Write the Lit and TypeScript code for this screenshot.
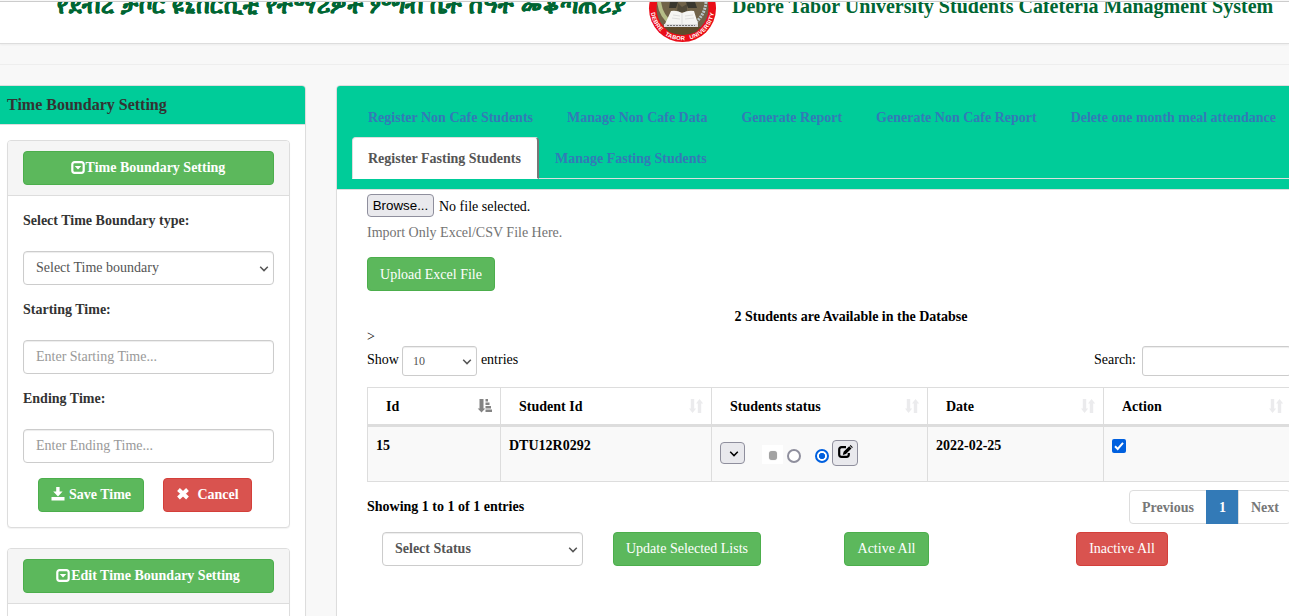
import { LitElement, html, css, svg } from "lit";
import { customElement } from "lit/decorators.js";

const icon = (body: unknown, cls = "ic") =>
  html`<svg class=${cls} viewBox="0 0 14 14" width="14" height="14">${body}</svg>`;

const collapseDown = icon(svg`
  <path fill="none" stroke="currentColor" stroke-width="2.200" d="M3.600 1.100h6.800a2.300 2.300 0 0 1 2.300 2.300v6.200a2.300 2.300 0 0 1-2.300 2.300H3.600a2.300 2.300 0 0 1-2.300-2.300V3.400a2.300 2.300 0 0 1 2.300-2.300z"/>
  <path fill="currentColor" d="M3.700 5h6.600L7 8.500z"/>`);
const save = icon(svg`
  <path fill="currentColor" d="M5.200-1h3.400v4.500h3L7 8.500 2.200 3.500h3zM.5 9h13v3.600H.5z"/>`);
const remove = icon(svg`
  <path fill="none" stroke="currentColor" stroke-width="4" d="M2.500 1.500l9 8.500M11.500 1.500l-9 8.500"/>`);
const sortBoth = icon(svg`
  <path fill="currentColor" d="M1.800 0h3.400v9.500h2L3.500 14 0 9.500h1.800zM8.800 14h3.400V4.500h2L10.500 0 7 4.500h1.800z"/>`, "sort");
const sortAsc = icon(svg`
  <path fill="currentColor" d="M1.500 0h4v9.500h1.800L3.500 13.500-.3 9.500h1.800zM7.500 0h2.500v2.500H7.500zM7.500 3.500h4v2.500h-4zM7.500 7h5.500v2.500H7.500zM7.500 10.500H14V13H7.500z"/>`, "sort on");
const chevron = html`<svg class="chev" viewBox="0 0 10 6" width="10" height="6"><path fill="none" stroke="currentColor" stroke-width="1.500" d="M1.200.8L5 4.600 8.800.8"/></svg>`;

@customElement("app-root")
export class AppRoot extends LitElement {
  static styles = css`
    :host { display: block; width: 1289px; height: 616px; overflow: hidden; background: #f8f8f8;
      font: 14px/20px "Liberation Serif", "Times New Roman", serif; color: #000; }
    * { box-sizing: border-box; }
    .top { margin-top: 1px; background: #fff; border-top: 1px solid #ccc; border-bottom: 1px solid #ddd;
      height: 43px; overflow: hidden; display: flex; box-shadow: 0 1px 2px rgba(0,0,0,.05); }
    .wrap { display: flow-root; background: #f8f8f8; }
    .title { color: #063; font-weight: bold; font-size: 20px; line-height: 24px; white-space: nowrap; margin-top: -8px; }
    .am { width: 648px; padding-left: 57px; font-size: 23px; letter-spacing: .65px; flex: none; -webkit-text-stroke: .5px #063; }
    .en { margin-left: 16px; letter-spacing: .015px; }
    .logo { display: block; flex: none; }
    .rule { height: 1px; background: #eee; margin: 20px 0; }
    .cols { display: flex; align-items: flex-start; }
    .panel { background: #fff; border: 1px solid #ddd; border-radius: 4px; box-shadow: 0 1px 1px rgba(0,0,0,.05); }
    .side { width: 314px; margin-left: -8px; flex: none; height: 560px; }
    .side > .head { background: #00cc99; color: #333; font-size: 16px; font-weight: bold; line-height: 18px;
      padding: 10px 15px; height: 39px; border-bottom: 1px solid #ddd; border-radius: 3px 3px 0 0; padding-left: 14px; }
    .box { margin: 15px 15px 20px 14px; font-weight: bold; color: #333; }
    .box + .box { margin-top: 0; }
    .box > .head { background: #f5f5f5; padding: 10px 15px; border-bottom: 1px solid #ddd; border-radius: 3px 3px 0 0; }
    .body { padding: 15px; }
    .btn { display: inline-flex; align-items: center; justify-content: center; height: 34px; padding: 0 0 1px; color: #fff;
      background: #5cb85c; border: 1px solid #4cae4c; border-radius: 4px; font: inherit; white-space: nowrap; }
    .red { background: #d9534f; border-color: #d43f3a; }
    .full { width: 100%; }
    .ic { flex: none; overflow: visible; }
    .full .ic { margin-left: -1px; margin-right: 1px; }
    .field { display: flex; align-items: center; justify-content: space-between; height: 34px; padding: 0 4px 0 12px;
      background: #fff; border: 1px solid #ccc; border-radius: 4px; color: #555; font-weight: normal; box-shadow: inset 0 1px 1px rgba(0,0,0,.075); }
    .field.ph { color: #999; }
    .chev { position: relative; top: 1px; flex: none; }
    .body .field { margin: 20px 0 15px; }
    .acts { display: flex; padding-left: 15px; gap: 19px; }
    .w106 { width: 106px; gap: 4px; }
    .w89 { width: 89px; gap: 7px; }
    .main { width: 986px; margin-left: 30px; flex: none; height: 560px; }
    .tabsbar { height: 104px; background: #00cc99; border-bottom: 1px solid #ddd; border-radius: 3px 3px 0 0; padding: 10px 15px; }
    .tabs { display: flex; flex-wrap: wrap; height: 83px; border-bottom: 1px solid #ddd; font-weight: bold; color: #337ab7; align-content: flex-start; }
    .tab { height: 42px; margin: 0 2px -1px 0; padding: 11px 15px 9px; border: 1px solid transparent; line-height: 20px; white-space: nowrap; }
    .tab.on { background: #fff; color: #555; border: 1px solid #ddd; border-right: 2px solid #777; border-bottom-color: #fff; border-radius: 4px 4px 0 0; margin-right: 0; padding-right: 16px; }
    .content { padding: 4px 30px; width: 984px; }
    .file { display: flex; align-items: center; gap: 5px; height: 24px; padding-top: 1px; }
    .browse { width: 67px; height: 23px; border: 1px solid #8f8f9d; border-radius: 4px; background: #e9e9ed; text-align: center;
      font: 13.333px/22px "Liberation Sans", Arial, sans-serif; margin-top: -2px; }
    .hint { color: #737373; margin: 5px 0 14px; }
    .count { font-weight: bold; text-align: center; margin: 16px 15px 0 0; padding-left: 59px; }
    .tools { display: flex; align-items: center; height: 30px; width: 924px; margin-top: -1px; }
    .tools .field { height: 30px; border-radius: 3px; }
    .tools span { padding-bottom: 2px; }
    .len { width: 75px; margin: 0 4px 0 3px; font-size: 12px; padding: 0 4px 0 10px; }
    .find { width: 149px; margin-left: 6px; }
    .push { margin-left: auto; }
    table { border-collapse: separate; border-spacing: 0; table-layout: fixed; width: 925px; margin-top: 11px; border: solid #ddd; border-width: 1px 0 0 1px; }
    th, td { text-align: left; font-weight: bold; border-right: 1px solid #ddd; padding: 0; vertical-align: top; }
    th { height: 39px; border-bottom: 3px solid #ddd; }
    td { height: 55px; background: #f9f9f9; border-bottom: 1px solid #ddd; padding: 9px 8px 0; }
    .h { display: flex; justify-content: space-between; align-items: center; height: 36px; padding: 1px 8px 0 18px; }
    .sort { color: #ebebed; position: relative; top: -1px; overflow: visible; }
    .sort.on { color: #848484; }
    .stat { display: flex; height: 40px; padding-top: 3px; align-items: flex-start; }
    .mini { display: flex; align-items: center; justify-content: center; width: 25px; height: 22px; border: 1px solid #8f8f9d; border-radius: 4px; background: #e9e9ed; padding-left: 2px; margin-top: 3px; }
    .pic { width: 21px; height: 19px; background: #fff; margin: 6px 0 0 17px; display: flex; align-items: center; justify-content: center; }
    .blob { width: 8px; height: 9px; border-radius: 3px; background: #a2a2a2; box-shadow: 0 0 1px #bbb; margin-top: 2px; }
    .radio { width: 14px; height: 14px; border-radius: 50%; border: 2px solid #8f8f9d; background: #fff; margin: 10px 0 0 4px; flex: none; }
    .radio.on { border-color: #0060df; margin-left: 14px; background: radial-gradient(circle, #0060df 2.800px, #fff 3.400px); }
    .edit { width: 26px; height: 26px; border: 1px solid #8f8f9d; border-radius: 4px; background: #e9e9ed; margin: 1px 0 0 3px; display: flex; justify-content: center; padding-top: 4px; flex: none; }
    .edit svg { display: block; flex: none; }
    .check { display: block; margin: 3px 0 0; }
    .foot { display: flex; justify-content: space-between; width: 924px; margin-top: 8px; font-weight: bold; }
    .info { padding-top: 7px; }
    .pages { display: flex; height: 34px; color: #777; }
    .pg { border: 1px solid #ddd; padding: 7px 0 0; text-align: center; margin-left: -1px; background: #fff; }
    .prev { width: 78px; border-radius: 4px 0 0 4px; }
    .cur { width: 33px; background: #337ab7; border-color: #337ab7; color: #fff; }
    .next { width: 53px; border-radius: 0 4px 4px 0; padding-left: 1px; }
    .bulk { display: flex; margin: 8px 0 0 15px; }
    .bulk .field { width: 201px; font-weight: bold; }
    .b1 { width: 148px; margin-left: 30px; } .b2 { width: 85px; margin-left: 83px; } .b3 { width: 92px; margin-left: 147px; }
    .up { width: 128px; padding: 1px 0 0; }
    .ring { font: bold 5.800px "Liberation Sans", Arial, sans-serif; fill: #fff; letter-spacing: .3px; word-spacing: 3px; }
  `;

  private readonly tabs = ["Register Non Cafe Students", "Manage Non Cafe Data", "Generate Report", "Generate Non Cafe Report",
    "Delete one month meal attendance", "Register Fasting Students", "Manage Fasting Students"];
  private readonly columns: [string, number][] = [["Id", 133], ["Student Id", 211], ["Students status", 216], ["Date", 176], ["Action", 188]];

  private logo() {
    return html`<svg class="logo" width="68" height="41" viewBox="648 2 68 41">
      <circle cx="682.500" cy="8.500" r="33.500" fill="#ea0d18"/>
      <circle cx="682.500" cy="8.500" r="26" fill="#706248"/>
      <path d="M659 2q2 15 14 23" fill="none" stroke="#b5bd87" stroke-width="4"/>
      <path d="M706 2q-1 13-12 22" fill="none" stroke="#b9c6c9" stroke-width="3" stroke-dasharray="2 1"/>
      <path d="M670 2h8l-2 6h-7zM686 2h9l2 6h-9z" fill="#39372e"/>
      <path d="M678 3l4 4 5-3v8h-10z" fill="#514a39"/>
      <path d="M664 27h37l-5 5q-13 6-27 0z" fill="#5d4b2b"/>
      <path d="M671 11q6-1 11 2 6-3 12-2l4 13h-33z" fill="#f5f5f2"/>
      <path d="M682 13v11M673 15l7 1M672 18l8 1M685 16l8-1M685 19l9-1" stroke="#ccc" stroke-width=".6"/>
      <path d="M664 24h34v3h-34z" fill="#ddd"/><path d="M667 25.500h28" stroke="#777" stroke-width="1" stroke-dasharray="2 1"/>
      <path id="arc" d="M650.700 8.500a31.800 31.800 0 0 0 63.600 0" fill="none"/>
      <text class="ring"><textPath href="#arc" startOffset="50%" text-anchor="middle">DEBRE TABOR UNIVERSITY</textPath></text>
    </svg>`;
  }

  render() {
    return html`<div class="wrap">
      <div class="top">
        <div class="title am">የደብረ ታቦር ዩኒቨርሲቲ የተማሪዎች ምግብ ቤት ሰዓት መቆጣጠሪያ</div>
        ${this.logo()}
        <div class="title en">Debre Tabor University Students Cafeteria Managment System</div>
      </div>
      <div class="rule"></div>
      <div class="cols">
        <div class="panel side">
          <div class="head">Time Boundary Setting</div>
          <div class="panel box">
            <div class="head"><div class="btn full">${collapseDown}Time Boundary Setting</div></div>
            <div class="body">
              <div>Select Time Boundary type:</div>
              <div class="field">Select Time boundary${chevron}</div>
              <div>Starting Time:</div>
              <div class="field ph">Enter Starting Time...</div>
              <div>Ending Time:</div>
              <div class="field ph">Enter Ending Time...</div>
              <div class="acts"><div class="btn w106">${save}Save Time</div><div class="btn red w89">${remove}Cancel</div></div>
            </div>
          </div>
          <div class="panel box">
            <div class="head"><div class="btn full">${collapseDown}Edit Time Boundary Setting</div></div>
            <div class="body"></div>
          </div>
        </div>
        <div class="panel main">
          <div class="tabsbar"><div class="tabs">
            ${this.tabs.map((t, i) => html`<div class="tab ${i === 5 ? "on" : ""}">${t}</div>`)}
          </div></div>
          <div class="content">
            <div class="file"><div class="browse">Browse...</div>No file selected.</div>
            <div class="hint">Import Only Excel/CSV File Here.</div>
            <div class="btn up">Upload Excel File</div>
            <div class="count">2 Students are Available in the Databse</div>
            <div>&gt;</div>
            <div class="tools"><span>Show</span><div class="field len">10${chevron}</div><span>entries</span>
              <span class="push">Search:</span><div class="field find"></div></div>
            <table>
              <colgroup>${this.columns.map(([, w]) => html`<col style="width:${w}px">`)}</colgroup>
              <thead><tr>${this.columns.map(([n], i) => html`<th><div class="h">${n}${i ? sortBoth : sortAsc}</div></th>`)}</tr></thead>
              <tbody><tr>
                <td>15</td><td>DTU12R0292</td>
                <td><div class="stat">
                  <div class="mini">${chevron}</div><div class="pic"><div class="blob"></div></div>
                  <div class="radio"></div><div class="radio on"></div>
                  <div class="edit"><svg width="16" height="15" viewBox="0 0 16 15">
                    <path fill="none" stroke="#000" stroke-width="2.200" d="M9 2.200H4.500a2.300 2.300 0 0 0-2.300 2.300v5a2.300 2.300 0 0 0 2.300 2.300h5a2.300 2.300 0 0 0 2.300-2.300V8"/>
                    <path d="M5.800 10l.8-3.200 5.600-5.600 2.300 2.300-5.600 5.600zM12.800.7l.8-.7 2.200 2.200-.7.700z"/></svg></div>
                </div></td>
                <td>2022-02-25</td>
                <td><svg class="check" width="14" height="14" viewBox="0 0 14 14"><rect width="14" height="14" rx="2" fill="#0060df"/><path fill="none" stroke="#fff" stroke-width="2" d="M3 7.300l2.700 2.700L11 3.800"/></svg></td>
              </tr></tbody>
            </table>
            <div class="foot"><div class="info">Showing 1 to 1 of 1 entries</div>
              <div class="pages"><div class="pg prev">Previous</div><div class="pg cur">1</div><div class="pg next">Next</div></div></div>
            <div class="bulk"><div class="field">Select Status${chevron}</div>
              <div class="btn b1">Update Selected Lists</div><div class="btn b2">Active All</div><div class="btn red b3">Inactive All</div></div>
          </div>
        </div>
      </div>
    </div>`;
  }
}
